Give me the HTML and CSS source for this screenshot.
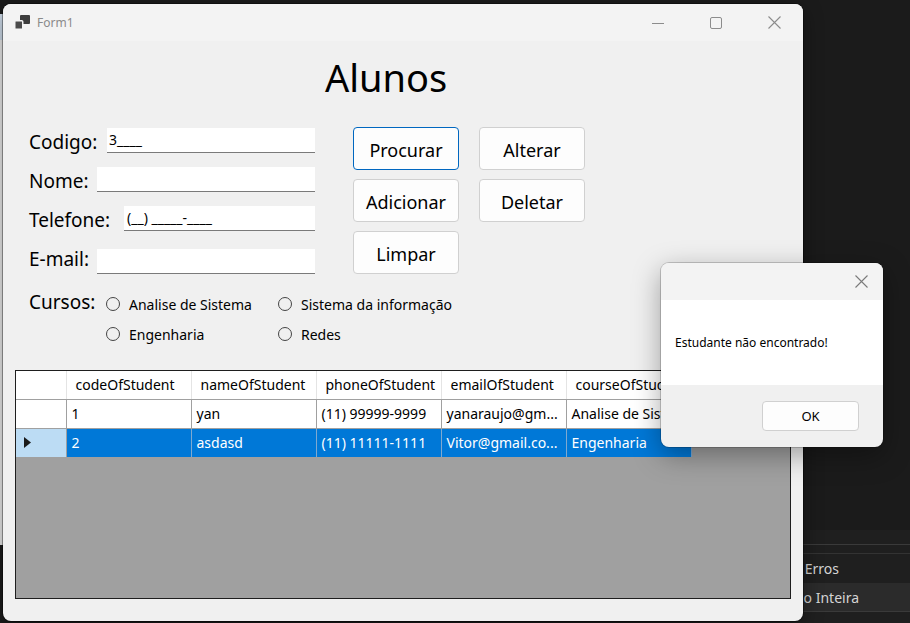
FILE: index.html
```html
<!DOCTYPE html>
<html lang="pt-BR">
<head>
<meta charset="utf-8">
<title>Form1</title>
<link rel="stylesheet" href="styles.css">
</head>
<body>
<div class="desktop">
  <div class="behind-left"></div>
  <div class="ide-panel">
    <div class="ide-top"></div>
    <div class="ide-gap"></div>
    <div class="ide-row">Lista de Erros</div>
    <div class="ide-row ide-row-active">Solução Inteira</div>
  </div>

  <div class="window">
    <div class="titlebar">
      <svg class="app-icon" width="16" height="15" viewBox="0 0 16 15">
        <rect x="6" y="0" width="10" height="9" rx="1" fill="#3d3d3d"/>
        <rect x="0.75" y="5.75" width="8" height="8.5" rx="1" fill="#4a4a4a" stroke="#f3f3f3" stroke-width="1.5"/>
      </svg>
      <span class="title">Form1</span>
      <div class="controls">
        <span class="ctrl">
          <svg width="12" height="12" viewBox="0 0 12 12"><line x1="0" y1="6.5" x2="12" y2="6.5" stroke="#8c8c8c" stroke-width="1"/></svg>
        </span>
        <span class="ctrl">
          <svg width="12" height="12" viewBox="0 0 12 12"><rect x="0.5" y="0.5" width="11" height="11" rx="1.5" fill="none" stroke="#8c8c8c" stroke-width="1"/></svg>
        </span>
        <span class="ctrl">
          <svg width="13" height="13" viewBox="0 0 13 13"><path d="M0.5 0.5 L12.5 12.5 M12.5 0.5 L0.5 12.5" stroke="#8c8c8c" stroke-width="1.1" fill="none"/></svg>
        </span>
      </div>
    </div>

    <div class="client">
      <h1 class="heading">Alunos</h1>

      <div class="top-area">
        <div class="fields">
          <div class="field">
            <span class="field-label">Codigo:</span>
            <div class="input input-codigo">3____</div>
          </div>
          <div class="field field-2">
            <span class="field-label">Nome:</span>
            <div class="input input-wide"></div>
          </div>
          <div class="field field-3">
            <span class="field-label">Telefone:</span>
            <div class="input input-phone">(__) _____-____</div>
          </div>
          <div class="field field-4">
            <span class="field-label">E-mail:</span>
            <div class="input input-wide"></div>
          </div>
        </div>

        <div class="buttons">
          <button class="btn btn-focused">Procurar</button>
          <button class="btn">Alterar</button>
          <button class="btn">Adicionar</button>
          <button class="btn">Deletar</button>
          <button class="btn">Limpar</button>
        </div>
      </div>

      <div class="courses">
        <span class="courses-label">Cursos:</span>
        <div class="radio-grid">
          <span class="radio"><span class="radio-dot"></span>Analise de Sistema</span>
          <span class="radio"><span class="radio-dot"></span>Sistema da informação</span>
          <span class="radio"><span class="radio-dot"></span>Engenharia</span>
          <span class="radio"><span class="radio-dot"></span>Redes</span>
        </div>
      </div>

      <div class="datagrid">
        <table class="grid-table">
          <colgroup>
            <col class="col-head">
            <col class="col-data">
            <col class="col-data">
            <col class="col-data">
            <col class="col-data">
            <col class="col-data">
          </colgroup>
          <thead>
            <tr>
              <th class="corner"></th>
              <th>codeOfStudent</th>
              <th>nameOfStudent</th>
              <th>phoneOfStudent</th>
              <th>emailOfStudent</th>
              <th>courseOfStudent</th>
            </tr>
          </thead>
          <tbody>
            <tr>
              <td class="row-head"></td>
              <td>1</td>
              <td>yan</td>
              <td>(11) 99999-9999</td>
              <td>yanaraujo@gm...</td>
              <td>Analise de Sist...</td>
            </tr>
            <tr class="selected">
              <td class="row-head">
                <svg width="7" height="11" viewBox="0 0 7 11"><path d="M0 0 L7 5.5 L0 11 Z" fill="#1a1a1a"/></svg>
              </td>
              <td>2</td>
              <td>asdasd</td>
              <td>(11) 11111-1111</td>
              <td>Vitor@gmail.co...</td>
              <td>Engenharia</td>
            </tr>
          </tbody>
        </table>
      </div>
    </div>
  </div>

  <div class="dialog">
    <div class="dialog-title">
      <svg width="13" height="13" viewBox="0 0 13 13"><path d="M0.5 0.5 L12.5 12.5 M12.5 0.5 L0.5 12.5" stroke="#7a7a7a" stroke-width="1.1" fill="none"/></svg>
    </div>
    <div class="dialog-body">Estudante não encontrado!</div>
    <div class="dialog-footer">
      <button class="dialog-btn">OK</button>
    </div>
  </div>
</div>
</body>
</html>
```

FILE: styles.css
```css
* { box-sizing: border-box; }

html, body {
  margin: 0;
  padding: 0;
}

body {
  width: 910px;
  height: 623px;
  overflow: hidden;
  background: #1b1b1b;
  font-family: "Noto Sans", "Open Sans", sans-serif;
  color: #000;
}

.desktop {
  position: relative;
  width: 910px;
  height: 623px;
}

.behind-left {
  position: absolute;
  left: 0;
  top: 14px;
  width: 4px;
  height: 531px;
  background: linear-gradient(#cfdcea 0, #cfdcea 26px, #ebebeb 26px);
}

/* IDE panel behind, bottom right */
.ide-panel {
  position: absolute;
  left: 700px;
  top: 530px;
  width: 210px;
  height: 93px;
  background: #1f1f1f;
  color: #d4d4d4;
  font-size: 14px;
}

.ide-top {
  height: 15px;
  border-bottom: 1px solid #3a3a3a;
}

.ide-gap {
  height: 9px;
  border-bottom: 1px solid #333;
}

.ide-row {
  height: 29px;
  line-height: 29px;
  text-align: right;
  padding-right: 71px;
  white-space: nowrap;
}

.ide-row-active {
  background: #2b2b2b;
  padding-right: 51px;
  border-bottom: 1px solid #3a3a3a;
}

/* Main window */
.window {
  position: absolute;
  left: 3px;
  top: 4px;
  width: 800px;
  height: 617px;
  background: #f0f0f0;
  border-radius: 8px;
  overflow: hidden;
  box-shadow: 0 0 0 1px rgba(0, 0, 0, 0.35), 0 6px 20px rgba(0, 0, 0, 0.4);
  z-index: 2;
}

.titlebar {
  height: 37px;
  background: #f3f3f3;
  display: flex;
  align-items: center;
  padding-left: 11px;
}

.app-icon {
  display: block;
  margin-top: -1px;
}

.title {
  margin-left: 7px;
  font-size: 12px;
  color: #8a8a8a;
}

.controls {
  margin-left: auto;
  display: flex;
  height: 100%;
}

.ctrl {
  width: 58px;
  height: 100%;
  display: flex;
  align-items: center;
  justify-content: center;
}

.ctrl svg { display: block; }

.client {
  padding-left: 12px;
}

.heading {
  margin: 0;
  padding: 14px 0 0 310px;
  height: 86px;
  font-size: 38px;
  font-weight: 400;
  line-height: 44px;
}

/* Fields + buttons */
.top-area {
  display: flex;
  align-items: flex-start;
  margin-left: 14px;
}

.fields {
  width: 286px;
  padding-top: 1px;
  display: flex;
  flex-direction: column;
}

.field {
  display: flex;
  align-items: center;
  height: 25px;
}

.field-2, .field-3 { margin-top: 14px; }
.field-4 { margin-top: 18px; }

.field-label {
  font-size: 19px;
  line-height: 25px;
  padding-top: 3px;
  white-space: nowrap;
}

.field-4 .field-label { padding-top: 0; margin-top: -5px; }

.input {
  margin-left: auto;
  height: 25px;
  background: #fff;
  border-bottom: 1px solid #7a7a7a;
  font-size: 14px;
  line-height: 24px;
  padding-left: 2px;
  white-space: pre;
}

.input-codigo { width: 208px; }
.input-wide { width: 218px; }
.input-phone { width: 191px; padding-left: 3px; }

.buttons {
  margin-left: 38px;
  display: grid;
  grid-template-columns: 106px 106px;
  grid-auto-rows: 43px;
  column-gap: 20px;
  row-gap: 9px;
}

.btn {
  font-family: inherit;
  font-size: 18px;
  color: #000;
  background: #fdfdfd;
  border: 1px solid #d0d0d0;
  border-radius: 4px;
  padding: 3px 0 0;
  margin: 0;
}

.btn-focused {
  border-color: #0067c0;
}

/* Radios */
.courses {
  display: flex;
  align-items: flex-start;
  margin-left: 14px;
  margin-top: 15px;
}

.courses-label {
  width: 77px;
  font-size: 19px;
  line-height: 30px;
  margin-top: -2px;
}

.radio-grid {
  display: grid;
  grid-template-columns: 172px 180px;
  grid-auto-rows: 30px;
}

.radio {
  display: flex;
  align-items: center;
  font-size: 14px;
  white-space: nowrap;
}

.radio-dot {
  width: 14px;
  height: 14px;
  border: 1px solid #444;
  border-radius: 50%;
  margin-right: 9px;
  flex: none;
}

/* Data grid */
.datagrid {
  margin-top: 21px;
  width: 776px;
  height: 229px;
  border: 1px solid #1e1e1e;
  background: #a0a0a0;
  overflow: hidden;
}

.grid-table {
  border-collapse: collapse;
  table-layout: fixed;
  width: 675px;
  font-size: 14px;
}

.col-head { width: 50px; }
.col-data { width: 125px; }

.grid-table th {
  height: 28px;
  padding: 0 0 0 9px;
  font-weight: 400;
  text-align: left;
  background: #fff;
  border-right: 1px solid #e4e4e4;
  border-bottom: 1px solid #a0a0a0;
  white-space: nowrap;
  overflow: hidden;
}

.grid-table td {
  height: 29px;
  padding: 0 0 0 5px;
  background: #fff;
  border-right: 1px solid #a0a0a0;
  border-bottom: 1px solid #a0a0a0;
  white-space: nowrap;
  overflow: hidden;
}

.grid-table .row-head {
  padding: 0 0 0 8px;
}

.grid-table .row-head svg { display: block; }

.selected td {
  background: #0078d7;
  color: #fff;
  border-right-color: #7fa9d0;
}

.selected .row-head {
  background: #bcdcf4;
  border-right-color: #a0a0a0;
}

/* Message box */
.dialog {
  position: absolute;
  left: 661px;
  top: 263px;
  width: 222px;
  height: 184px;
  border-radius: 8px;
  overflow: hidden;
  background: #f0f0f0;
  box-shadow: 0 0 0 1px rgba(0, 0, 0, 0.18), 0 8px 28px rgba(0, 0, 0, 0.35);
  display: flex;
  flex-direction: column;
  z-index: 3;
}

.dialog-title {
  height: 37px;
  background: #f3f3f3;
  display: flex;
  align-items: center;
  justify-content: flex-end;
  padding-right: 15px;
}

.dialog-title svg { display: block; }

.dialog-body {
  height: 85px;
  background: #fff;
  display: flex;
  align-items: center;
  padding-left: 14px;
  font-size: 12px;
  white-space: nowrap;
}

.dialog-footer {
  flex: 1;
  display: flex;
  justify-content: flex-end;
  align-items: flex-start;
  padding: 16px 24px 0 0;
}

.dialog-btn {
  width: 97px;
  height: 30px;
  font-family: inherit;
  font-size: 13px;
  color: #000;
  background: #fdfdfd;
  border: 1px solid #d0d0d0;
  border-radius: 4px;
  padding: 0;
}
```
